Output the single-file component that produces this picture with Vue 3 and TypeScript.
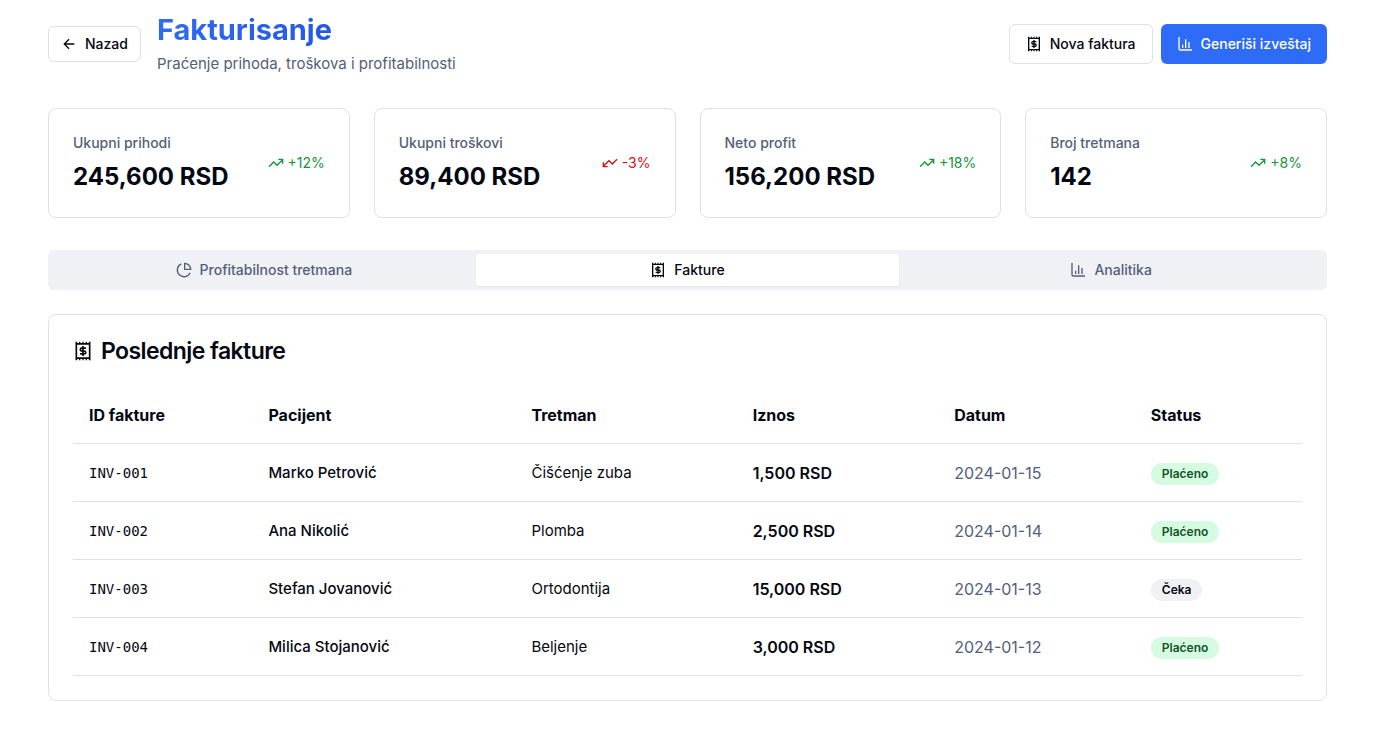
<script setup lang="ts">
import { ref } from 'vue'

interface Stat { label: string; value: string; change: string; up: boolean }
interface Invoice { id: string; patient: string; treatment: string; amount: string; date: string; paid: boolean }

const stats: Stat[] = [
  { label: 'Ukupni prihodi', value: '245,600 RSD', change: '+12%', up: true },
  { label: 'Ukupni troškovi', value: '89,400 RSD', change: '-3%', up: false },
  { label: 'Neto profit', value: '156,200 RSD', change: '+18%', up: true },
  { label: 'Broj tretmana', value: '142', change: '+8%', up: true },
]

const tabs = ['Profitabilnost tretmana', 'Fakture', 'Analitika']
const active = ref(1)

const columns = ['ID fakture', 'Pacijent', 'Tretman', 'Iznos', 'Datum', 'Status']
const invoices: Invoice[] = [
  { id: 'INV-001', patient: 'Marko Petrović', treatment: 'Čišćenje zuba', amount: '1,500 RSD', date: '2024-01-15', paid: true },
  { id: 'INV-002', patient: 'Ana Nikolić', treatment: 'Plomba', amount: '2,500 RSD', date: '2024-01-14', paid: true },
  { id: 'INV-003', patient: 'Stefan Jovanović', treatment: 'Ortodontija', amount: '15,000 RSD', date: '2024-01-13', paid: false },
  { id: 'INV-004', patient: 'Milica Stojanović', treatment: 'Beljenje', amount: '3,000 RSD', date: '2024-01-12', paid: true },
]
</script>

<template>
  <svg class="sprite" aria-hidden="true">
    <symbol id="i-receipt" viewBox="0 0 24 24">
      <path d="M4 1v22M20 1v22M4 3.5h16M4 20.5h16" />
      <path d="M8 1v2M12 1v2M16 1v2M8 21v2M12 21v2M16 21v2" stroke-width="1.5" />
      <path d="M15.5 8.5h-5a1.75 1.75 0 0 0 0 3.5h3a1.75 1.75 0 0 1 0 3.5h-5M12 6v12" />
    </symbol>
    <symbol id="i-chart" viewBox="0 0 24 24">
      <path d="M3 1.5V19a2 2 0 0 0 2 2h17.5M8.5 13v5M13 5v13M18 9v9" />
    </symbol>
    <symbol id="i-pie" viewBox="0 0 24 24">
      <path d="M22 11A9 9 0 0 0 13 2v9zM8 2.9A10 10 0 1 0 21.2 16" />
    </symbol>
    <symbol id="i-trend" viewBox="0 0 24 24">
      <path d="M1.5 17.5l7-7 5 5 8.5-8.5M15.5 6.5H22V13" />
    </symbol>
  </svg>

  <main class="page">
    <header class="header">
      <div class="heading">
        <button type="button" class="btn back">
          <svg class="icon" viewBox="0 0 24 24"><path d="M12 19l-7-7 7-7M20 12H5" /></svg>
          Nazad
        </button>
        <div>
          <h1>Fakturisanje</h1>
          <p class="subtitle">Praćenje prihoda, troškova i profitabilnosti</p>
        </div>
      </div>
      <div class="actions">
        <button type="button" class="btn"><svg class="icon"><use href="#i-receipt" /></svg>Nova faktura</button>
        <button type="button" class="btn primary"><svg class="icon"><use href="#i-chart" /></svg>Generiši izveštaj</button>
      </div>
    </header>

    <section class="stats">
      <article v-for="s in stats" :key="s.label" class="card stat">
        <div>
          <p class="label">{{ s.label }}</p>
          <p class="value">{{ s.value }}</p>
        </div>
        <div class="change" :class="{ down: !s.up }">
          <svg class="icon"><use href="#i-trend" /></svg>{{ s.change }}
        </div>
      </article>
    </section>

    <div class="tabs" role="tablist">
      <button
        v-for="(t, i) in tabs" :key="t" type="button" role="tab" class="tab"
        :class="{ active: active === i }" :aria-selected="active === i" @click="active = i"
      >
        <svg class="icon"><use :href="['#i-pie', '#i-receipt', '#i-chart'][i]" /></svg>{{ t }}
      </button>
    </div>

    <section class="card invoices">
      <h2><svg class="icon large"><use href="#i-receipt" /></svg>Poslednje fakture</h2>
      <table>
        <colgroup>
          <col class="c-id"><col class="c-patient"><col class="c-treatment"><col class="c-amount"><col class="c-date"><col>
        </colgroup>
        <thead>
          <tr><th v-for="c in columns" :key="c" scope="col">{{ c }}</th></tr>
        </thead>
        <tbody>
          <tr v-for="v in invoices" :key="v.id">
            <td class="mono">{{ v.id }}</td>
            <td class="patient">{{ v.patient }}</td>
            <td class="treatment">{{ v.treatment }}</td>
            <td class="amount">{{ v.amount }}</td>
            <td class="date">{{ v.date }}</td>
            <td><span class="badge" :class="{ paid: v.paid }">{{ v.paid ? 'Plaćeno' : 'Čeka' }}</span></td>
          </tr>
        </tbody>
      </table>
    </section>
  </main>
</template>

<style>
body { margin: 0; background: #fff; }
</style>

<style scoped>
* { box-sizing: border-box; }
h1, h2, p { margin: 0; }
.sprite { position: absolute; width: 0; height: 0; }
.page {
  padding: 12px 48px 48px;
  color: #030712;
  font: 16px/24px Inter, "Open Sans", sans-serif;
}
.icon {
  width: 16px;
  height: 16px;
  flex: none;
  fill: none;
  stroke: currentColor;
  stroke-width: 2;
}
.large { width: 20px; height: 20px; }
.header, .heading, .actions { display: flex; align-items: center; }
.header { justify-content: space-between; margin-bottom: 32px; }
.heading { gap: 16px; }
.actions { gap: 8px; }
h1 {
  font-size: 29px;
  line-height: 36px;
  font-weight: 700;
  color: transparent;
  background: linear-gradient(90deg, #2f6bf5, #1d4bd7);
  background-clip: text;
}
.subtitle { margin-top: 4px; font-size: 15px; color: #52607a; }
.btn {
  display: flex;
  align-items: center;
  gap: 8px;
  height: 40px;
  padding: 0 16px;
  border: 1px solid #e0e1e6;
  border-radius: 6px;
  background: #fff;
  color: inherit;
  font: 500 14px/20px Inter, sans-serif;
}
.back { height: 36px; padding: 0 12px; }
.primary { border: 0; background: #2e6bf6; color: #fff; }
.stats { display: grid; grid-template-columns: repeat(4, 1fr); gap: 24px; margin-bottom: 32px; }
.card { border: 1px solid #e0e1e6; border-radius: 8px; background: #fff; }
.stat { display: flex; align-items: center; justify-content: space-between; padding: 24px; }
.label { font-size: 14px; line-height: 20px; font-weight: 500; color: #52607a; }
.value { margin-top: 8px; font-size: 24px; line-height: 32px; font-weight: 700; }
.change { display: flex; align-items: center; gap: 4px; font-size: 14px; line-height: 20px; color: #16963a; }
.change.down { color: #d0101a; }
.down .icon { transform: rotate(180deg); }
.tabs {
  display: grid;
  grid-template-columns: repeat(3, 1fr);
  padding: 4px;
  margin-bottom: 24px;
  border-radius: 6px;
  background: #f0f1f5;
}
.tab {
  display: flex;
  align-items: center;
  justify-content: center;
  gap: 8px;
  height: 32px;
  border: 0;
  border-radius: 3px;
  background: transparent;
  color: #52607a;
  font: 500 14px/20px Inter, sans-serif;
}
.tab.active { background: #fff; color: #030712; box-shadow: 0 1px 2px #0000000d; }
.invoices { padding: 24px; }
h2 {
  display: flex;
  align-items: center;
  gap: 8px;
  margin-bottom: 24px;
  font-size: 23px;
  line-height: 24px;
  font-weight: 600;
  letter-spacing: -0.025em;
}
table { width: 100%; table-layout: fixed; border-collapse: separate; border-spacing: 0; }
.c-id { width: 14.6%; }
.c-patient { width: 21.4%; }
.c-treatment { width: 18%; }
.c-amount { width: 16.4%; }
.c-date { width: 16%; }
th, td { padding: 0 16px; text-align: left; border-bottom: 1px solid #e0e1e6; }
th { height: 57px; font-weight: 700; }
td { height: 58px; }
.mono { font-family: "DejaVu Sans Mono", monospace; font-size: 14px; }
.patient { font-size: 15px; font-weight: 500; }
.treatment { font-size: 15px; }
.amount { font-weight: 600; }
.date { color: #52607a; }
.badge {
  display: inline-block;
  padding: 3px 11px;
  border-radius: 11px;
  background: #f0f1f5;
  font-size: 12px;
  line-height: 16px;
  font-weight: 600;
}
.badge.paid { background: #d5fbe1; color: #145229; }
</style>
